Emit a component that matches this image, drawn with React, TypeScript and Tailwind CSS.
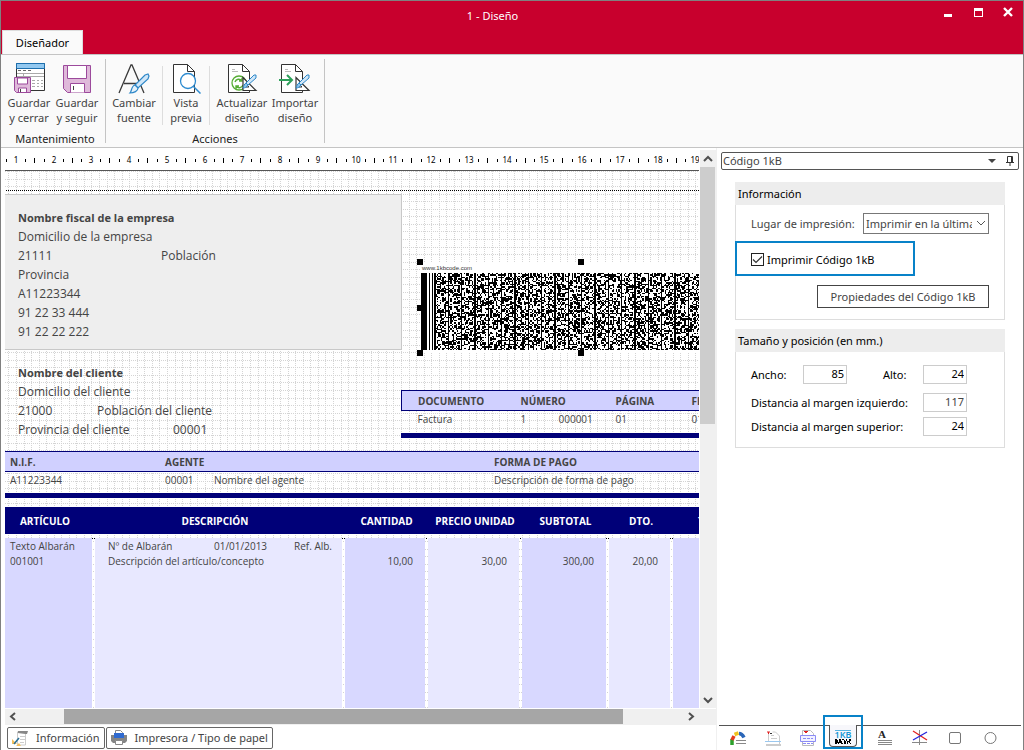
import React, { useState } from 'react';

const CM = 37.75;
const GRID = 7.55;

const ICON = 'h-8 w-8 shrink-0';

const SaveCloseIcon = () => (
  <svg className={ICON} viewBox="0 0 32 32" fill="none">
    <path d="M3.500 1.500h28v27h-28z" fill="#fff" stroke="#333" />
    <path d="M3.500 1.500h28v5h-28z" fill="#92c8f0" stroke="#1c6fae" />
    <path d="M5 8.500h3m2 0h3m2 0h3" stroke="#666" />
    <path d="M4 11.500h27M4 14.500h27M10.500 12v4" stroke="#aaa" />
    <path d="M19 18.500h3m2 0h2m2 0h2M19 21.500h3m2 0h2m2 0h2M19 24.500h3m2 0h2m2 0h2" stroke="#aaa" />
    <path d="M1.500 15.500h16v15h-14l-2-2z" fill="#dfb9da" stroke="#9c4a9c" />
    <path d="M4.500 16h10v6h-10zM5.500 30v-4h8v4" fill="#fff" stroke="#9c4a9c" />
    <path d="M7.500 27v3" stroke="#444" />
  </svg>
);

const SaveIcon = () => (
  <svg className={ICON} viewBox="0 0 32 32" fill="none">
    <path d="M2.500 3.500h27v27h-23l-4-4z" fill="#dfb9da" stroke="#9c4a9c" />
    <path d="M6.500 3.500h19v13h-19z" fill="#fff" stroke="#9c4a9c" />
    <path d="M9.500 30.500v-9h14v9" fill="#fff" stroke="#9c4a9c" />
    <path d="M12.500 24v4" stroke="#444" />
  </svg>
);

const FontIcon = () => (
  <svg className={ICON} viewBox="0 0 32 32" fill="none">
    <path d="M1 31L13 3h1l12 28M6 21.500h15" stroke="#3a3a3a" strokeWidth="1.300" />
    <path d="M27 13l3-1 1 2-1 3-10 9-3-3z" fill="#cfe6f8" stroke="#2d87c8" strokeWidth="1.200" />
    <path d="M17 23l3 3c0 3-4 5-8 5 2-2 1-7 5-8z" fill="#e3f1fb" stroke="#2d87c8" strokeWidth="1.200" />
  </svg>
);

const PreviewIcon = () => (
  <svg className={ICON} viewBox="0 0 32 32" fill="none">
    <path d="M3.500 2.500h14l7 7v21h-21z" fill="#fff" stroke="#333" />
    <path d="M17.500 2.500v7h7" stroke="#333" />
    <circle cx="18" cy="19" r="7.500" fill="#fff" stroke="#2d8bd0" strokeWidth="1.300" />
    <path d="M23.500 24.500l7 7" stroke="#2d8bd0" strokeWidth="1.500" />
  </svg>
);

const PenAndSquare = () => (
  <>
    <path d="M17 15.500v13h13z" fill="#fff" stroke="#333" strokeWidth="1.200" />
    <path d="M20 22v3h3z" fill="#fff" stroke="#333" />
    <path d="M28 13l2 0v3l-8 7-2-2z" fill="#cfe6f8" stroke="#2d87c8" />
    <path d="M20 21l2 2c-1 2-3 3-5 3 1-2 1-4 3-5z" fill="#8cc3ea" stroke="#2d87c8" />
  </>
);

const DocShape = () => (
  <>
    <path d="M2.500 2.500h14l7 7v21h-21z" fill="#fff" stroke="#333" />
    <path d="M16.500 2.500v7h7" stroke="#333" />
    <path d="M6 7.500h3M6 9.500h6" stroke="#bbb" />
  </>
);

const RefreshIcon = () => (
  <svg className={ICON} viewBox="0 0 32 32" fill="none">
    <DocShape />
    <circle cx="13" cy="21" r="7" fill="#fff" stroke="#55ad35" strokeWidth="1.300" />
    <path d="M9 20c1-3 5-4 7-1m0-3v3h-3M17 23c-1 3-5 4-7 1m0 3v-3h3" stroke="#55ad35" strokeWidth="1.400" />
    <PenAndSquare />
  </svg>
);

const ImportIcon = () => (
  <svg className={ICON} viewBox="0 0 32 32" fill="none">
    <DocShape />
    <path d="M0 18h12M8 13l5 5-5 5" stroke="#2da05a" strokeWidth="2" />
    <PenAndSquare />
  </svg>
);

interface RibbonButtonProps {
  icon: React.ReactNode;
  top: string;
  bottom: string;
  className: string;
}

const RibbonButton: React.FC<RibbonButtonProps> = ({ icon, top, bottom, className }) => (
  <button type="button" className={`flex flex-col items-center text-[#444] hover:bg-gray-100 ${className}`}>
    {icon}
    <span className="mt-px leading-[15px] whitespace-nowrap">
      {top}
      <br />
      {bottom}
    </span>
  </button>
);

const Ribbon: React.FC = () => (
  <div className="flex border-t border-b border-[#c4c4c4] bg-[#fafafa]">
    <section className="my-1 flex flex-col border-r border-[#c4c4c4] pt-[3px] pl-1">
      <div className="flex pr-1">
        <RibbonButton icon={<SaveCloseIcon />} top="Guardar" bottom="y cerrar" className="w-12" />
        <RibbonButton icon={<SaveIcon />} top="Guardar" bottom="y seguir" className="w-12" />
      </div>
      <h2 className="mt-1.5 -mb-1 text-center leading-4 text-[#222]">Mantenimiento</h2>
    </section>
    <section className="my-1 flex flex-col border-r border-[#c4c4c4] pt-[3px]">
      <div className="flex">
        <RibbonButton icon={<FontIcon />} top="Cambiar" bottom="fuente" className="w-14" />
        <div className="mt-1 border-r border-[#ddd]" />
        <RibbonButton icon={<PreviewIcon />} top="Vista" bottom="previa" className="w-[46px]" />
        <div className="mt-1 border-r border-[#ddd]" />
        <RibbonButton icon={<RefreshIcon />} top="Actualizar" bottom="diseño" className="ml-1 w-14" />
        <RibbonButton icon={<ImportIcon />} top="Importar" bottom="diseño" className="mr-1 w-[50px]" />
      </div>
      <h2 className="mt-1.5 -mb-1 text-center leading-4 text-[#222]">Acciones</h2>
    </section>
  </div>
);

const TitleBar: React.FC = () => (
  <header className="flex h-[53px] items-stretch bg-[#c8002d] text-white">
    <div className="flex flex-1 items-end">
      <button type="button" className="ml-px h-6 w-[81px] border border-b-0 border-[#ddd] bg-[#fafafa] text-black">
        Diseñador
      </button>
    </div>
    <h1 className="mr-8 pt-[7px]">1 - Diseño</h1>
    <div className="flex flex-1 items-start justify-end gap-3.5 pt-1 pr-[7px]">
      <button type="button" aria-label="Minimizar" className="h-4 w-4">
        <svg className="h-4 w-4" viewBox="0 0 16 16"><path d="M4 9h8v3H4z" fill="#fff" /></svg>
      </button>
      <button type="button" aria-label="Maximizar" className="h-4 w-4">
        <svg className="h-4 w-4" viewBox="0 0 16 16"><path d="M4 3h9v9H4zm1 3v5h7V6z" fill="#fff" fillRule="evenodd" /></svg>
      </button>
      <button type="button" aria-label="Cerrar" className="h-4 w-4">
        <svg className="h-4 w-4" viewBox="0 0 16 16"><path d="M4 3l8 8M12 3l-8 8" stroke="#fff" strokeWidth="2.400" /></svg>
      </button>
    </div>
  </header>
);

const Ruler: React.FC = () => (
  <svg className="block h-[21px] w-full" role="img" aria-label="Regla">
    {Array.from({ length: 19 }, (_, i) => i + 1).map(n => {
      const x = Math.round(n * CM - 26.8);
      return (
        <g key={n} shapeRendering="crispEdges">
          <text x={x} y="13" textAnchor="middle" fontSize="8" fontFamily="Noto Sans, sans-serif" fill="#000">{n}</text>
          <rect x={x - 10} y="9" width="1" height="3" />
          <rect x={x + 9} y="9" width="1" height="3" />
          <rect x={x + 18} y="8" width="1" height="5" />
        </g>
      );
    })}
    <rect x="0" y="20" width="100%" height="1" fill="#555" />
  </svg>
);

const Grid: React.FC = () => (
  <svg className="absolute inset-0 h-full w-full" shapeRendering="crispEdges" aria-hidden="true">
    {Array.from({ length: 200 }, (_, i) => {
      const x = Math.round(3.4 + i * GRID) + 0.5;
      return <line key={`v${i}`} x1={x} x2={x} y1="0" y2="2000" stroke="#d4d4d4" strokeDasharray="1 1" />;
    })}
    {Array.from({ length: 150 }, (_, i) => {
      const y = Math.floor(0.5 + i * GRID) + 0.5;
      return <line key={`h${i}`} x1="0" x2="2000" y1={y} y2={y} stroke="#d4d4d4" strokeDasharray="1 1" />;
    })}
    <line x1="1" x2="2000" y1="19.500" y2="19.500" stroke="#000" strokeDasharray="1 1" />
    <line x1="1" x2="2000" y1="367.500" y2="367.500" stroke="#000" strokeDasharray="1 1" />
  </svg>
);

// 1kB code: start bars, then panels of ten modules split by a solid bar
const buildCodePath = () => {
  const unit = 1.333;
  let seed = 20131;
  let d = 'M0 0h6v77h-6zM7.500 0h1.500v77h-1.500zM10.500 0h1v77h-1z';
  for (let col = 0; col < 230; col++) {
    const x = (13.3 + col * unit).toFixed(2);
    const part = col % 10;
    if (part === 0) {
      d += `M${x} 0h1.330v77h-1.330z`;
      continue;
    }
    const white = part === 9 || part === 1 ? 0.65 : 0.48;
    for (let row = 0; row < 58; row++) {
      seed = (seed * 1103515245 + 12345) % 2147483648;
      if (seed / 2147483648 > white) {
        d += `M${x} ${(row * unit).toFixed(2)}h1.340v1.340h-1.340z`;
      }
    }
  }
  return d;
};

const CODE_PATH = buildCodePath();

const HANDLES = [
  '-top-[3px] -left-[3px]',
  '-top-[3px] left-[158px]',
  'top-[43px] -left-[3px]',
  '-bottom-[3px] -left-[3px]',
  '-bottom-[3px] left-[158px]',
];

const BarCode: React.FC = () => (
  <div className="absolute top-[91px] left-[415px] h-[91px] w-[321px] bg-white">
    <p className="pt-0.5 pl-0.5 font-['Liberation_Sans'] text-[6px] leading-[9px] text-[#333]">www.1kbcode.com</p>
    <svg className="ml-px h-[77px] w-[320px]" shapeRendering="crispEdges" role="img" aria-label="Código 1kB">
      <path d={CODE_PATH} fill="#000" />
    </svg>
    {HANDLES.map(pos => (
      <span key={pos} className={`absolute h-1.5 w-1.5 bg-black ${pos}`} />
    ))}
  </div>
);

const BLOCK = 'border-collapse table-fixed text-left text-[10px] whitespace-nowrap text-[#444]';

const DocumentBlock: React.FC = () => (
  <div className="absolute top-[219px] left-[396px] w-[380px] border-b-[5px] border-[#000078]">
    <table className={`w-full ${BLOCK}`}>
      <thead>
        <tr className="h-5 border border-[#000078] bg-[#d0d0ff]">
          <th className="w-[119px] pl-4">DOCUMENTO</th>
          <th className="w-[38px]">NÚMERO</th>
          <th className="w-[57px]"></th>
          <th className="w-[76px]">PÁGINA</th>
          <th>FECHA</th>
        </tr>
      </thead>
      <tbody>
        <tr className="h-[22px] align-top leading-[17px]">
          <td className="pl-4">Factura</td>
          <td>1</td>
          <td>000001</td>
          <td>01</td>
          <td>01/01/2013</td>
        </tr>
      </tbody>
    </table>
  </div>
);

const AgentBlock: React.FC = () => (
  <div className="absolute top-[280px] left-0 w-full border-b-[5px] border-[#000078]">
    <table className={`w-full ${BLOCK}`}>
      <thead>
        <tr className="h-5 border-y border-[#000078] bg-[#d0d0ff]">
          <th className="w-[160px] pl-[5px]">N.I.F.</th>
          <th className="w-[329px]">AGENTE</th>
          <th>FORMA DE PAGO</th>
        </tr>
      </thead>
      <tbody>
        <tr className="h-[21px] align-top leading-[17px]">
          <td className="pl-[5px]">A11223344</td>
          <td>
            <span className="inline-block w-[49px]">00001</span>Nombre del agente
          </td>
          <td>Descripción de forma de pago</td>
        </tr>
      </tbody>
    </table>
  </div>
);

const DARK = 'border-r-[3px] border-transparent bg-[#d8d8ff] bg-clip-padding';
const LIGHT = 'border-r-[3px] border-transparent bg-[#e8e8ff] bg-clip-padding';

const ItemsBlock: React.FC = () => (
  <table className="absolute top-[336px] left-0 h-[201px] w-[754px] table-fixed border-separate border-spacing-0 text-left text-[10px] leading-[14px] whitespace-nowrap text-[#444]">
    <thead>
      <tr className="h-[27px] bg-[#000078] text-center text-white">
        <th className="w-[90px] pr-2.5">ARTÍCULO</th>
        <th className="w-[250px] pr-2.5">DESCRIPCIÓN</th>
        <th className="w-[83px]">CANTIDAD</th>
        <th className="w-[94px]">PRECIO UNIDAD</th>
        <th className="w-[87px]">SUBTOTAL</th>
        <th className="w-16">DTO.</th>
        <th className="pl-[25px] text-left">TOTAL</th>
      </tr>
      <tr className="h-1" aria-hidden="true"><td colSpan={7} /></tr>
    </thead>
    <tbody>
      <tr className="h-[15px]">
        <td className={`pl-[5px] ${DARK}`}>Texto Albarán</td>
        <td className={`pl-[13px] ${LIGHT}`}>
          <span className="inline-block w-[106px]">Nº de Albarán</span>
          <span className="inline-block w-20">01/01/2013</span>Ref. Alb.
        </td>
        <td className={DARK} />
        <td className={LIGHT} />
        <td className={DARK} />
        <td className={LIGHT} />
        <td className={DARK} />
      </tr>
      <tr className="h-[15px]">
        <td className={`pl-[5px] ${DARK}`}>001001</td>
        <td className={`pl-[13px] ${LIGHT}`}>Descripción del artículo/concepto</td>
        <td className={`pr-3 text-right ${DARK}`}>10,00</td>
        <td className={`pr-3 text-right ${LIGHT}`}>30,00</td>
        <td className={`pr-3 text-right ${DARK}`}>300,00</td>
        <td className={`pr-3 text-right ${LIGHT}`}>20,00</td>
        <td className={DARK} />
      </tr>
      <tr aria-hidden="true">
        <td className={DARK} />
        <td className={LIGHT} />
        <td className={DARK} />
        <td className={LIGHT} />
        <td className={DARK} />
        <td className={LIGHT} />
        <td className={DARK} />
      </tr>
    </tbody>
  </table>
);

const DesignCanvas: React.FC = () => (
  <div className="relative min-h-[537px] flex-1 overflow-hidden bg-white font-['Open_Sans','Noto_Sans',sans-serif] text-[#444]">
    <Grid />
    <div className="absolute top-[23px] left-0 h-[156px] w-[397px] border border-l-0 border-[#c8c8c8] bg-[#eee] pt-[13px] pl-[13px] text-xs leading-[19px]">
      <p className="text-[11px] leading-[19px] font-bold">Nombre fiscal de la empresa</p>
      <p>Domicilio de la empresa</p>
      <p className="flex"><span className="w-[143px]">21111</span>Población</p>
      <p>Provincia</p>
      <p>A11223344</p>
      <p>91 22 33 444</p>
      <p>91 22 22 222</p>
    </div>
    <div className="absolute top-48 left-[13px] text-xs leading-[19px]">
      <p className="text-[11px] leading-[19px] font-bold">Nombre del cliente</p>
      <p>Domicilio del cliente</p>
      <p className="flex"><span className="w-[79px]">21000</span>Población del cliente</p>
      <p className="flex"><span className="w-[155px]">Provincia del cliente</span>00001</p>
    </div>
    <BarCode />
    <DocumentBlock />
    <AgentBlock />
    <ItemsBlock />
  </div>
);

const Arrow: React.FC<{ d: string }> = ({ d }) => (
  <svg className="h-4 w-4" viewBox="0 0 16 16" fill="none">
    <path d={d} stroke="#505050" strokeWidth="2" />
  </svg>
);

const VerticalScroll: React.FC = () => (
  <div className="ml-px flex w-4 flex-col bg-[#f0f0f0]">
    <button type="button" aria-label="Subir" className="h-[17px]"><Arrow d="M4 10l4-4 4 4" /></button>
    <div className="flex-1">
      <div className="h-[49%] w-[15px] bg-[#cdcdcd]" />
    </div>
    <button type="button" aria-label="Bajar" className="h-[17px]"><Arrow d="M4 6l4 4 4-4" /></button>
  </div>
);

const HorizontalScroll: React.FC = () => (
  <div className="flex h-4 bg-[#f0f0f0]">
    <button type="button" aria-label="Izquierda" className="w-4"><Arrow d="M10 4L6 7.500l4 3.500" /></button>
    <div className="flex-1 pr-[60px] pl-[43px]">
      <div className="h-[15px] bg-[#a6a6a6]" />
    </div>
    <button type="button" aria-label="Derecha" className="mr-[17px] w-4"><Arrow d="M6 4l4 3.500L6 11" /></button>
  </div>
);

const InfoIcon = () => (
  <svg className="h-4 w-4" viewBox="0 0 16 16" fill="none">
    <path d="M6 1h10l-1 3H5z" fill="#888" />
    <path d="M5.500 3v12h8V4" fill="#fff" stroke="#ccc" />
    <path d="M8 6.500h5M8 9.500h5M8 12.500h4" stroke="#ccc" />
    <path d="M0 9l5 5H0zM4 16l3-3 2 3z" fill="#f5bf5a" />
    <path d="M7 8l-5 6" stroke="#2a6f94" strokeWidth="1.500" />
  </svg>
);

const PrinterIcon = () => (
  <svg className="h-4 w-4" viewBox="0 0 16 16" fill="none">
    <path d="M0 5h16v6l-2 2H2l-2-2z" fill="#858585" />
    <path d="M4.500 4V.5h5l2 2V4" fill="#fff" stroke="#888" />
    <path d="M3 3h10v5H3z" fill="#2f6ad0" />
    <path d="M4.500 10.500h7v4h-7z" fill="#fff" stroke="#888" />
  </svg>
);

const BottomTabs: React.FC = () => (
  <nav className="flex gap-px pt-0.5 pb-px pl-0.5 text-[#444]">
    <button type="button" className="flex h-[22px] items-center gap-2 rounded-xs border border-[#666] px-1">
      <InfoIcon />
      Información
    </button>
    <button type="button" className="flex h-[22px] items-center gap-2 rounded-xs border border-[#666] px-1">
      <PrinterIcon />
      Impresora / Tipo de papel
    </button>
  </nav>
);

const TOOL = 'flex h-[22px] w-[35px] items-center justify-center';
const TOOL_ICON = 'h-4 w-4';

const ToolStrip: React.FC = () => (
  <nav className="mr-0.5 flex h-[25px] border-t border-[#555] pt-px pl-px">
    <button type="button" aria-label="Colores" className={TOOL}>
      <svg className={TOOL_ICON} viewBox="0 0 16 16" fill="none">
        <path d="M2 15V9" stroke="#2ca02c" strokeWidth="3.500" />
        <path d="M2 10l2-4" stroke="#e33b1e" strokeWidth="3.500" />
        <path d="M4.500 4.500l4-1.500" stroke="#efc31c" strokeWidth="3.500" />
        <path d="M9 3.500c2 0 4 2 5 4" stroke="#2b66b8" strokeWidth="3.500" />
        <path d="M6 10.500h10M6 13.500h10" stroke="#888" />
      </svg>
    </button>
    <button type="button" aria-label="Cabecera" className={TOOL}>
      <svg className={TOOL_ICON} viewBox="0 0 16 16" fill="none">
        <path d="M3.500 3v8M14.500 14V6l-4-4h-3" stroke="#ccc" />
        <path d="M2 2h3M3.500 2v2" stroke="#e02020" />
        <path d="M5 3.500h2" stroke="#333" />
        <path d="M6 5.500h3M6 8.500h6" stroke="#ccc" />
        <path d="M0 11.500h16" stroke="#9bc8ef" />
        <path d="M1 15h15" stroke="#ccc" strokeWidth="2" />
      </svg>
    </button>
    <button type="button" aria-label="Página" className={TOOL}>
      <svg className={TOOL_ICON} viewBox="0 0 16 16" fill="none">
        <path d="M2.500 15.500V.5h8l3 3v12z" stroke="#bbb" />
        <path d="M4 1.500h4M5 2.500h2" stroke="#e02020" />
        <path d="M.5 5.500h15v6H.5z" fill="#f2f2ff" stroke="#8b8bf5" />
        <path d="M3 8.500h10M3 13.500h10" stroke="#8b8bf5" strokeDasharray="3 1" />
      </svg>
    </button>
    <div className="relative -mt-0.5 ml-1 flex h-[22px] w-7 justify-center rounded-b border border-t-0 border-[#555] bg-[#f7f7fb]">
      <button type="button" aria-label="Código 1kB">
        <svg className="h-[18px] w-[18px]" viewBox="0 0 18 18">
          <path d="M1 3.500h16" stroke="#5ab4e0" />
          <text x="9" y="11" textAnchor="middle" fontSize="9" fontWeight="600" fontFamily="Noto Sans, sans-serif" fill="#1797d5">1KB</text>
          <path d="M1 12h2v1h1v2h1v2H4v-1H3v1H1zM5 12h2v2h1v2h1v1H7v-1H5zM8 12h2v1H8zM10 13h1v1h1v3h-2zM12 12h1v2h-1zM13 14h2v1h-1v2h-1zM15 12h2v2h-1v2h-1zM16 16h1v1h-1z" fill="#000" />
        </svg>
      </button>
      <span className="pointer-events-none absolute -top-2.5 -left-[7px] h-[34px] w-10 border-2 border-[#0882c8]" />
    </div>
    <button type="button" aria-label="Texto" className={`ml-2.5 ${TOOL}`}>
      <svg className={TOOL_ICON} viewBox="0 0 16 16">
        <text x="5" y="8" textAnchor="middle" fontSize="11" fontWeight="bold" fontFamily="Liberation Serif, serif" fill="#222">A</text>
        <path d="M1 10.500h14M1 12.500h14M1 14.500h14" stroke="#888" />
      </svg>
    </button>
    <button type="button" aria-label="Línea" className={TOOL}>
      <svg className={TOOL_ICON} viewBox="0 0 16 16" fill="none">
        <path d="M0 12.500h15M7.500 0v15" stroke="#888" />
        <path d="M1 1l14 9" stroke="#e02020" strokeWidth="1.300" />
        <path d="M15 2L1 10" stroke="#2222dd" strokeWidth="1.300" />
      </svg>
    </button>
    <button type="button" aria-label="Rectángulo" className={TOOL}>
      <svg className={TOOL_ICON} viewBox="0 0 16 16" fill="none">
        <rect x="2.500" y="2.500" width="11" height="11" rx="1.500" stroke="#777" />
      </svg>
    </button>
    <button type="button" aria-label="Elipse" className={TOOL}>
      <svg className={TOOL_ICON} viewBox="0 0 16 16" fill="none">
        <circle cx="8.500" cy="8" r="5.500" stroke="#777" />
      </svg>
    </button>
  </nav>
);

const FIELD = 'h-[19px] w-11 border border-[#ccc] pr-0.5 pb-0.5 text-right';

const PropertiesPanel: React.FC = () => {
  const [printCode, setPrintCode] = useState(true);
  const [size, setSize] = useState({ width: '85', height: '24', left: '117', top: '24' });

  const update = (key: keyof typeof size) => (e: React.ChangeEvent<HTMLInputElement>) =>
    setSize(prev => ({ ...prev, [key]: e.target.value }));

  return (
    <aside className="flex w-[307px] shrink-0 flex-col border-l border-[#f0f0f0] pl-0.5">
      <div className="mt-1 mr-1 ml-0.5 flex h-[18px] items-center rounded-xs border border-[#555] pr-1 pl-px text-[#444]">
        <h2 className="flex-1">Código 1kB</h2>
        <button type="button" aria-label="Opciones" className="mr-2.5">
          <svg className="h-2 w-2" viewBox="0 0 8 8"><path d="M0 2h8L4 6z" fill="#444" /></svg>
        </button>
        <button type="button" aria-label="Fijar">
          <svg className="h-[10px] w-2" viewBox="0 0 8 10" fill="none">
            <path d="M1.500 6V.5h5V6M0 6.500h8M4 7v3" stroke="#333" />
            <path d="M5.500 1v5" stroke="#333" />
          </svg>
        </button>
      </div>

      <section className="mt-3 mr-[18px] ml-4">
        <h3 className="h-[23px] bg-[#ededed] pl-[3px] leading-[23px]">Información</h3>
        <div className="border border-t-0 border-[#ddd] pb-[11px]">
          <div className="flex items-center justify-between pt-2 pr-[15px] pl-[15px]">
            <label htmlFor="place" className="text-[#444]">Lugar de impresión:</label>
            <div className="relative">
              <select id="place" className="block h-[21px] w-[126px] appearance-none border border-[#777] pr-4 pl-0.5 text-[#444]">
                <option>Imprimir en la última página</option>
                <option>Imprimir en todas las páginas</option>
              </select>
              <svg className="pointer-events-none absolute top-1.5 right-1 h-2 w-2" viewBox="0 0 8 8" fill="none">
                <path d="M0 2l4 4 4-4" stroke="#555" />
              </svg>
            </div>
          </div>
          <label className="mt-[7px] -ml-px flex h-[35px] w-[180px] items-center gap-[3px] border-2 border-[#0882c8] pt-0.5 pl-3.5">
            <span className="relative h-[13px] w-[13px]">
              <input
                type="checkbox"
                checked={printCode}
                onChange={e => setPrintCode(e.target.checked)}
                className="block h-[13px] w-[13px] appearance-none border border-[#222] bg-white"
              />
              {printCode && (
                <svg className="pointer-events-none absolute inset-0 h-[13px] w-[13px]" viewBox="0 0 13 13" fill="none">
                  <path d="M2 6.500L5 9.500l6-6" stroke="#333" strokeWidth="1.200" />
                </svg>
              )}
            </span>
            Imprimir Código 1kB
          </label>
          <div className="mt-[9px] mr-[15px] flex justify-end">
            <button type="button" className="h-[23px] w-[172px] border border-[#444] text-[#444]">
              Propiedades del Código 1kB
            </button>
          </div>
        </div>
      </section>

      <section className="mt-[9px] mr-[18px] ml-4">
        <h3 className="h-[23px] bg-[#ededed] pl-[3px] leading-[23px]">Tamaño y posición (en mm.)</h3>
        <div className="flex flex-col border border-t-0 border-[#ddd] pt-[13px] pr-[37px] pb-[11px] pl-[15px]">
          <div className="flex items-center">
            <label htmlFor="width" className="w-[52px]">Ancho:</label>
            <input id="width" value={size.width} onChange={update('width')} className={FIELD} />
            <label htmlFor="height" className="ml-9 flex-1">Alto:</label>
            <input id="height" value={size.height} onChange={update('height')} className={FIELD} />
          </div>
          <div className="mt-[9px] flex items-center justify-between">
            <label htmlFor="left">Distancia al margen izquierdo:</label>
            <input id="left" value={size.left} onChange={update('left')} className={`text-[#444] ${FIELD}`} />
          </div>
          <div className="mt-[5px] flex items-center justify-between">
            <label htmlFor="top">Distancia al margen superior:</label>
            <input id="top" value={size.top} onChange={update('top')} className={FIELD} />
          </div>
        </div>
      </section>

      <div className="mt-auto">
        <ToolStrip />
      </div>
    </aside>
  );
};

const App: React.FC = () => (
  <div className="flex min-h-screen flex-col border border-b-0 border-[#808080] bg-white font-['Noto_Sans','Open_Sans',sans-serif] text-[11px] leading-4 text-black">
    <TitleBar />
    <Ribbon />
    <main className="flex flex-1">
      <div className="flex min-w-0 flex-1 flex-col pt-0.5 pl-1">
        <div className="flex flex-1">
          <div className="flex min-w-0 flex-1 flex-col">
            <Ruler />
            <DesignCanvas />
          </div>
          <VerticalScroll />
        </div>
        <div className="pt-px">
          <HorizontalScroll />
        </div>
        <BottomTabs />
      </div>
      <PropertiesPanel />
    </main>
  </div>
);

export default App;
